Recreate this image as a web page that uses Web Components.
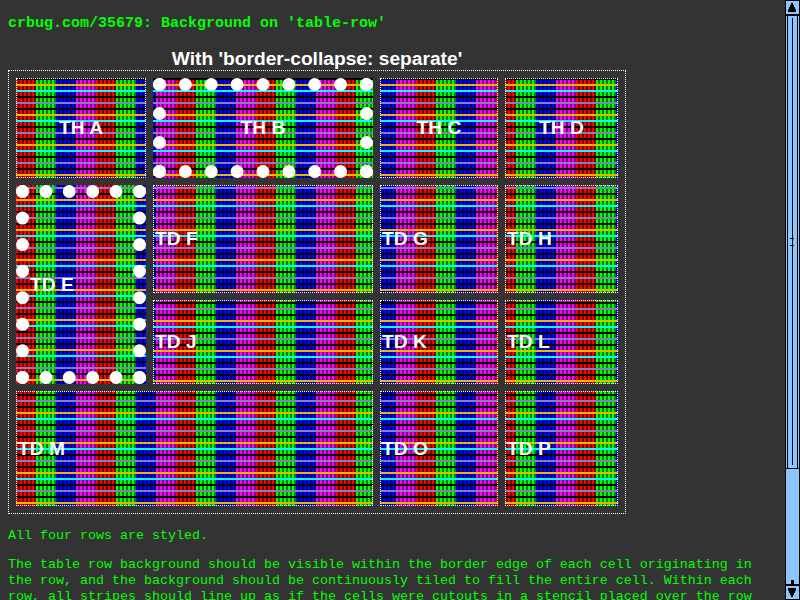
<!DOCTYPE html>
<html lang="en"><head><meta charset="utf-8"><title>Background on 'table-row'</title>
<style>html,body{margin:0;height:100%;overflow:hidden;background:#333}</style></head><body>
<test-page></test-page>
<script>
class StripeCell extends HTMLElement{
  constructor(){super();this.attachShadow({mode:'open'}).innerHTML=`<style>
  :host{display:flex;align-items:center;box-sizing:border-box;border:1px dotted #fff;padding:1px;
  font:bold 19.2px/22px "Liberation Sans",Arial,sans-serif;color:#fff;
  background-origin:border-box;background-clip:border-box;
  background-image:
   linear-gradient(#000 0 2px,transparent 2px 6px,#e6b800 6px 8px,transparent 8px 12px,#0ff 12px 14px,transparent 14px 18px,#000 18px 20px,transparent 20px 24px,#8080c0 24px 26px,transparent 26px),
   repeating-linear-gradient(90deg,transparent 0 2px,rgba(0,0,0,.5) 2px 4px),
   linear-gradient(90deg,#f00 0 20px,#0f0 20px 40px,#00f 40px 60px,#f0f 60px 80px);
  background-size:80px 30px,80px 30px,80px 30px;
  background-position:var(--x,0) var(--y,0)}
  :host([head]){justify-content:center}
  :host([dots]){border-width:13px}
  </style><span><slot></slot></span>`;}
}
customElements.define('stripe-cell',StripeCell);
class StripeTable extends HTMLElement{
  constructor(){super();this.attachShadow({mode:'open'}).innerHTML=`<style>
  :host{display:block;width:618px;color:#fff}
  .cap{font:bold 19.2px/22px "Liberation Sans",Arial,sans-serif;text-align:center}
  .grid{display:grid;box-sizing:border-box;height:444px;border:1px dotted #fff;padding:7px;gap:7px;grid-template-columns:130px 220px 118px 113px;grid-template-rows:100px 108px 84px 115px}
  .c2{--x:-57px}.c3{--x:-44px}.c4{--x:-9px}
  .r2{--y:8px}.r3{--y:-16px}.r4{--y:15px}
  .e{grid-row:span 2;padding-top:1px}.m{grid-column:span 2}
  </style><div class="cap"><slot></slot></div><div class="grid">
  <stripe-cell head>TH A</stripe-cell><stripe-cell head dots class="c2">TH B</stripe-cell><stripe-cell head class="c3">TH C</stripe-cell><stripe-cell head class="c4">TH D</stripe-cell>
  <stripe-cell dots class="e r2">TD E</stripe-cell><stripe-cell class="c2 r2">TD F</stripe-cell><stripe-cell class="c3 r2">TD G</stripe-cell><stripe-cell class="c4 r2">TD H</stripe-cell>
  <stripe-cell class="c2 r3">TD J</stripe-cell><stripe-cell class="c3 r3">TD K</stripe-cell><stripe-cell class="c4 r3">TD L</stripe-cell>
  <stripe-cell class="m r4">TD M</stripe-cell><stripe-cell class="c3 r4">TD O</stripe-cell><stripe-cell class="c4 r4">TD P</stripe-cell></div>`;}
}
customElements.define('stripe-table',StripeTable);
class ScrollBar extends HTMLElement{
  constructor(){super();this.attachShadow({mode:'open'}).innerHTML=`<style>:host{display:block;width:15px;height:600px}svg{display:block}</style>
  <svg width="15" height="600" shape-rendering="crispEdges"><rect width="15" height="600" fill="#000"/>
  <g fill="#8cc6ff"><rect x="1" y="1" width="13" height="13"/><rect x="1" y="16" width="1" height="452"/><rect x="3" y="16" width="9" height="452"/><rect x="13" y="16" width="1" height="452"/><rect x="1" y="469" width="13" height="115"/><rect x="1" y="586" width="13" height="13"/></g>
  <path d="M7 18h1v447h-1zM5 238h4v1h-4zM5 245h4v1h-4zM6 580h3v5h-3zM6 3h2v2h1v2h1v2h1v3H3V9h1V7h1V5h1zM3 588h8v3h-1v2h-1v2h-1v2H6v-2H5v-2H4v-2H3z"/></svg>`;}
}
customElements.define('scroll-bar',ScrollBar);
class TestPage extends HTMLElement{
  constructor(){super();this.attachShadow({mode:'open'}).innerHTML=`<style>
  :host{display:flex;width:800px;height:600px;overflow:hidden;background:#333;color:#0f0;font:13.33px/16px "Liberation Mono","Courier New",monospace}
  main{flex:1;padding:15px 8px 0;min-width:0}
  h1{font-size:15px;line-height:17px;margin:0 0 16px}
  p{margin:0 0 13px;white-space:nowrap}stripe-table{margin-bottom:14px}
  </style><main><h1>crbug.com/35679: Background on 'table-row'</h1>
  <stripe-table>With 'border-collapse: separate'</stripe-table>
  <p>All four rows are styled.</p>
  <p>The table row background should be visible within the border edge of each cell originating in<br>the row, and the background should be continuously tiled to fill the entire cell. Within each<br>row, all stripes should line up as if the cells were cutouts in a stencil placed over the row</p></main><scroll-bar></scroll-bar>`;}
}
customElements.define('test-page',TestPage);
</script></body></html>
